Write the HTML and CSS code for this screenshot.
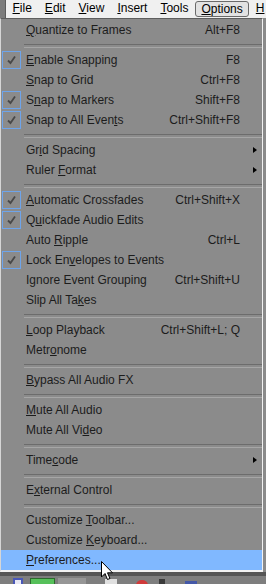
FILE: index.html
```html
<!DOCTYPE html>
<html lang="en">
<head>
  <meta charset="UTF-8">
  <title>Options menu</title>
  <link rel="stylesheet" href="styles.css">
</head>
<body>
  <!-- menu bar -->
  <div class="menubar">
    <div class="edge"></div>
    <span class="top"><u>F</u>ile</span>
    <span class="top"><u>E</u>dit</span>
    <span class="top"><u>V</u>iew</span>
    <span class="top"><u>I</u>nsert</span>
    <span class="top"><u>T</u>ools</span>
    <span class="top open"><u>O</u>ptions</span>
    <span class="top"><u>H</u></span>
  </div>

  <!-- dropdown -->
  <div class="menu">
    <div class="item"><span class="check"></span><span class="label"><u>Q</u>uantize to Frames</span><span class="key">Alt+F8</span><span class="arrow"></span></div>
    <div class="sep"></div>
    <div class="item"><span class="check on"></span><span class="label"><u>E</u>nable Snapping</span><span class="key">F8</span><span class="arrow"></span></div>
    <div class="item"><span class="check"></span><span class="label"><u>S</u>nap to Grid</span><span class="key">Ctrl+F8</span><span class="arrow"></span></div>
    <div class="item"><span class="check on"></span><span class="label">S<u>n</u>ap to Markers</span><span class="key">Shift+F8</span><span class="arrow"></span></div>
    <div class="item"><span class="check on"></span><span class="label">Snap to All Even<u>t</u>s</span><span class="key">Ctrl+Shift+F8</span><span class="arrow"></span></div>
    <div class="sep"></div>
    <div class="item"><span class="check"></span><span class="label">Gr<u>i</u>d Spacing</span><span class="key"></span><span class="arrow sub"></span></div>
    <div class="item"><span class="check"></span><span class="label">Ruler <u>F</u>ormat</span><span class="key"></span><span class="arrow sub"></span></div>
    <div class="sep"></div>
    <div class="item"><span class="check on"></span><span class="label"><u>A</u>utomatic Crossfades</span><span class="key">Ctrl+Shift+X</span><span class="arrow"></span></div>
    <div class="item"><span class="check on"></span><span class="label">Q<u>u</u>ickfade Audio Edits</span><span class="key"></span><span class="arrow"></span></div>
    <div class="item"><span class="check"></span><span class="label">Auto <u>R</u>ipple</span><span class="key">Ctrl+L</span><span class="arrow"></span></div>
    <div class="item"><span class="check on"></span><span class="label">Lock En<u>v</u>elopes to Events</span><span class="key"></span><span class="arrow"></span></div>
    <div class="item"><span class="check"></span><span class="label">I<u>g</u>nore Event Grouping</span><span class="key">Ctrl+Shift+U</span><span class="arrow"></span></div>
    <div class="item"><span class="check"></span><span class="label">Slip All Ta<u>k</u>es</span><span class="key"></span><span class="arrow"></span></div>
    <div class="sep"></div>
    <div class="item"><span class="check"></span><span class="label"><u>L</u>oop Playback</span><span class="key">Ctrl+Shift+L; Q</span><span class="arrow"></span></div>
    <div class="item"><span class="check"></span><span class="label">Metr<u>o</u>nome</span><span class="key"></span><span class="arrow"></span></div>
    <div class="sep"></div>
    <div class="item"><span class="check"></span><span class="label"><u>B</u>ypass All Audio FX</span><span class="key"></span><span class="arrow"></span></div>
    <div class="sep"></div>
    <div class="item"><span class="check"></span><span class="label"><u>M</u>ute All Audio</span><span class="key"></span><span class="arrow"></span></div>
    <div class="item"><span class="check"></span><span class="label">Mute All Vi<u>d</u>eo</span><span class="key"></span><span class="arrow"></span></div>
    <div class="sep"></div>
    <div class="item"><span class="check"></span><span class="label">Time<u>c</u>ode</span><span class="key"></span><span class="arrow sub"></span></div>
    <div class="sep"></div>
    <div class="item"><span class="check"></span><span class="label">E<u>x</u>ternal Control</span><span class="key"></span><span class="arrow"></span></div>
    <div class="sep"></div>
    <div class="item"><span class="check"></span><span class="label">Customize <u>T</u>oolbar...</span><span class="key"></span><span class="arrow"></span></div>
    <div class="item"><span class="check"></span><span class="label">Customize <u>K</u>eyboard...</span><span class="key"></span><span class="arrow"></span></div>
    <div class="item hover"><span class="check"></span><span class="label"><u>P</u>references...</span><span class="key"></span><span class="arrow"></span></div>
  </div>

  <!-- toolbar peeking out below -->
  <div class="divider"></div>
  <div class="toolbar">
    <span class="tb tb-blue"></span>
    <span class="tb tb-green"></span>
    <span class="tb tb-gray"></span>
    <span class="tb tb-white"></span>
    <span class="tb tb-red"></span>
    <span class="tb tb-dark"></span>
    <span class="tb tb-navy"></span>
  </div>

  <!-- mouse pointer -->
  <svg class="cursor" width="13" height="20" viewBox="0 0 13 20">
    <polygon points="0.5,0.5 0.5,16 4,12.5 6.5,18.5 9,17.5 6.5,11.8 11.5,11.8" fill="#fff" stroke="#000" stroke-width="1" stroke-linejoin="round"/>
  </svg>
</body>
</html>
```

FILE: styles.css
```css
* {
  box-sizing: border-box;
  margin: 0;
  padding: 0;
}

html, body {
  width: 266px;
  height: 584px;
  overflow: hidden;
}

body {
  position: relative;
  background: #8b8b8b;
  font-family: "Liberation Sans", Arial, sans-serif;
  font-size: 12px;
  color: #1c1c1c;
}

u {
  text-decoration: underline;
  text-underline-offset: 1px;
}

/* ======= menu bar ======= */
.menubar {
  display: flex;
  height: 18px;
  background: #f0f0f0;
  line-height: 17px;
  color: #000;
  white-space: nowrap;
}
.edge {
  width: 6px;
  flex: none;
  background: #7c7c7c;
  border-right: 1px solid #5c5c5c;
}
.top {
  padding: 0 6.5px;
  flex: none;
}
.top.open {
  margin: 1px 0;
  line-height: 14px;
  border: 1px solid #6a6a6a;
  border-radius: 3px;
  background: #e2e2e2;
  padding: 0 5.5px;
}

/* ======= dropdown ======= */
.menu {
  width: 263px;
  background: #8b8b8b;
  border-top: 1px solid #5e5e5e;
  border-left: 1px solid #d6d6d6;
  border-right: 1px solid #f2f2f2;
  border-bottom: 2px solid #f2f2f2;
  padding-top: 1px;
}

.item {
  display: grid;
  grid-template-columns: 25px 1fr auto 22px;
  align-items: center;
  height: 20px;
  line-height: 20px;
  white-space: nowrap;
}
.item.hover {
  background: #80b8ff;
}

.check {
  width: 19px;
  height: 18px;
  margin-left: 1px;
}
.check.on {
  border: 1px solid #6ea4ea;
  background: #8b8b8b url("data:image/svg+xml,%3Csvg xmlns='http://www.w3.org/2000/svg' width='17' height='16'%3E%3Cpath d='M5 8.5 L7.5 11 L12 4.5' fill='none' stroke='%23484848' stroke-width='1.8'/%3E%3C/svg%3E") no-repeat;
}

.key {
  text-align: right;
}

.arrow.sub {
  justify-self: start;
  margin-left: 13px;
  width: 0;
  height: 0;
  border-top: 3.5px solid transparent;
  border-bottom: 3.5px solid transparent;
  border-left: 4px solid #000;
}

.sep {
  height: 10px;
  margin-left: 23px;
  padding-top: 4px;
}
.sep::before {
  content: "";
  display: block;
  height: 2px;
  border-top: 1px solid #6c6c6c;
  border-bottom: 1px solid #a6a6a6;
}

/* ======= toolbar below ======= */
.divider {
  height: 4px;
  background: #555;
}
.toolbar {
  display: flex;
  align-items: flex-start;
  height: 12px;
  background: #7e7e7e;
  padding: 2px 0 0 13px;
}
.tb {
  display: block;
  height: 10px;
}
.tb-blue {
  width: 10px;
  background: #e8e8f4;
  border: 2px solid #4a58b8;
}
.tb-green {
  width: 25px;
  margin-left: 7px;
  background: #56c05a;
  border: 1px solid #2c6a2e;
}
.tb-gray {
  width: 28px;
  margin-left: 3px;
  background: #969696;
}
.tb-white {
  width: 12px;
  margin-left: 19px;
  margin-top: 1px;
  background: #e0e0e0;
}
.tb-red {
  width: 12px;
  margin-left: 19px;
  margin-top: 2px;
  background: #d03a3a;
  border-radius: 50%;
}
.tb-dark {
  width: 6px;
  margin-left: 11px;
  margin-top: 1px;
  background: #3a3a3a;
}
.tb-navy {
  width: 12px;
  margin-left: 20px;
  margin-top: 3px;
  background: #4458a8;
}

/* pointer sits over the menu */
.cursor {
  position: absolute;
  left: 101px;
  top: 561px;
}
```
